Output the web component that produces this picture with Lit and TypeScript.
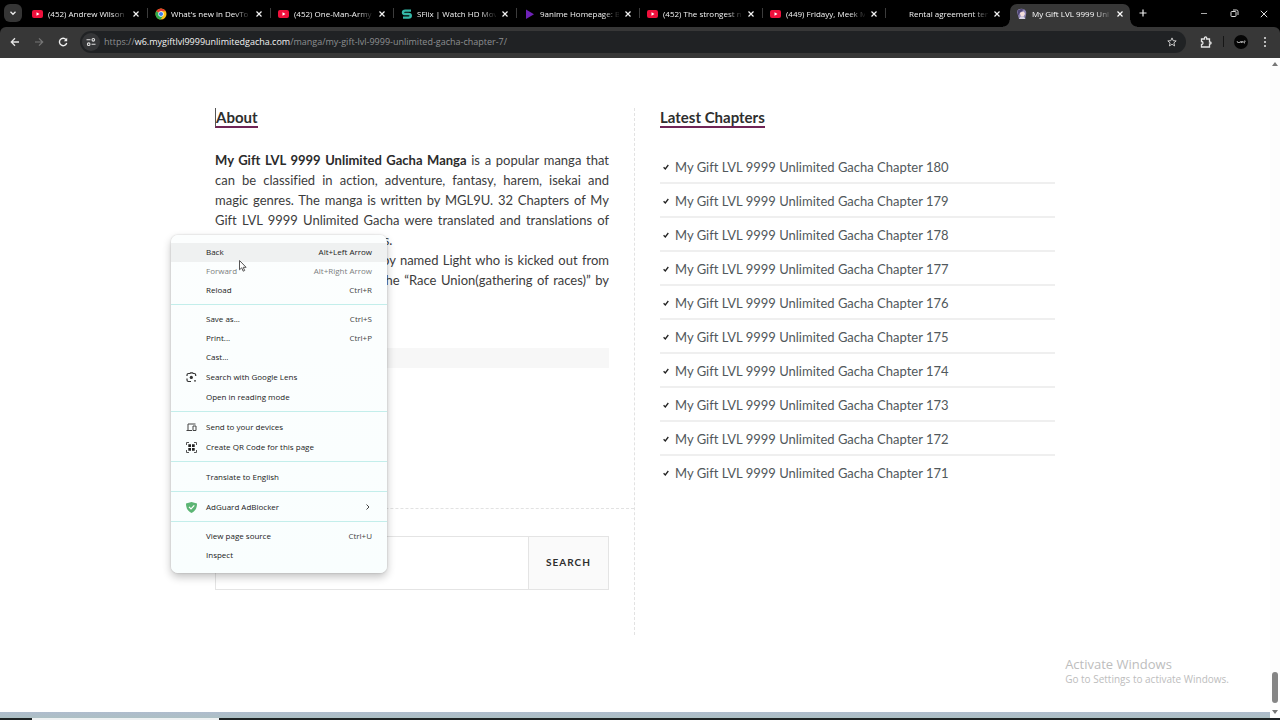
import { LitElement, html, css, svg, nothing, type TemplateResult } from "lit";
import { customElement, property } from "lit/decorators.js";
import { classMap } from "lit/directives/class-map.js";

type IconName = "youtube" | "chrome" | "sflix" | "play" | "none" | "avatar";

const tabIcons: Record<IconName, TemplateResult | typeof nothing> = {
  youtube: svg`<rect x="0" y="2" width="11" height="8" rx="2" fill="#f0103c"/><path d="M4.500 4.200v3.600L7.500 6z" fill="#fff"/>`,
  chrome: svg`<circle cx="6" cy="6" r="5.500" fill="#fbc116"/><path d="M6 6 1.200 3.300A5.500 5.500 0 0 1 10.800 3.300H6z" fill="#e33b2e"/><path d="M6 6 1.200 3.300A5.500 5.500 0 0 0 5.600 11.500L8.200 7.400z" fill="#2da94f"/><circle cx="6" cy="6" r="2.700" fill="#fff"/><circle cx="6" cy="6" r="2.100" fill="#3b7ded"/>`,
  sflix: svg`<path d="M10 2.600H4.200C2.600 2.600 2 3.400 2 4.400S2.800 6 4.200 6h3.400C9 6 9.800 6.700 9.800 7.800S9 9.600 7.600 9.600H2" fill="none" stroke="#35b8a8" stroke-width="2.400"/>`,
  play: svg`<path d="M2 1.500v9.500L10 6.200z" fill="#6f22b8"/>`,
  none: nothing,
  avatar: svg`<path d="M1 4C1 1.500 3.500.5 6 .8s4.500 1.700 4.200 5L9 11H3z" fill="#8f86b5"/><path d="M3.500 4.500 8 3.500l1 2.500-1.500 2.500H5z" fill="#f4dedb"/><path d="M1.500 2.500 5 1l3 .6-3.800 3L2 8z" fill="#4d4573"/><path d="M3 11l1.500-2.500h3L9.500 11z" fill="#d9d5e6"/>`,
};

const tabs: { title: string; icon: IconName; active?: boolean }[] = [
  { title: "(452) Andrew Wilson", icon: "youtube" },
  { title: "What's new in DevTo", icon: "chrome" },
  { title: "(452) One-Man-Army", icon: "youtube" },
  { title: "SFlix | Watch HD Mov", icon: "sflix" },
  { title: "9anime Homepage: B", icon: "play" },
  { title: "(452) The strongest n", icon: "youtube" },
  { title: "(449) Fridayy, Meek M", icon: "youtube" },
  { title: "Rental agreement ter", icon: "none" },
  { title: "My Gift LVL 9999 Unl", icon: "avatar", active: true },
];

const closeGlyph = svg`<path d="M1.500 1.500l5 5m0-5l-5 5" stroke="currentColor" stroke-width="1.200" fill="none"/>`;

@customElement("browser-tabs")
class BrowserTabs extends LitElement {
  static styles = css`
    :host { display: flex; height: 27px; background: #000; color: #f4f4f4; font: 8px/12px "Open Sans", "Noto Sans", sans-serif; }
    button { border: 0; padding: 0; background: none; color: inherit; font: inherit; display: flex; align-items: center; justify-content: center; }
    .search { width: 18px; height: 18px; margin: 4px 3px 0 4px; border-radius: 6px; background: #353535; flex: none; }
    .strip { flex: 1; display: flex; min-width: 0; }
    .tab { flex: 1 1 0; min-width: 0; display: flex; align-items: center; gap: 4px; padding: 0 7px 3px 7px; margin-top: 4px; position: relative; height: 23px; box-sizing: border-box; }
    .tab::after { content: ""; position: absolute; right: 0; top: 4px; width: 1px; height: 10px; background: #3c3c3c; }
    .tab.quiet::after, .tab.active::after { display: none; }
    .tab.active { color: #fff; }
    .tab.active::before { content: ""; position: absolute; inset: 0 -5px 0 -6px;
      background:
        radial-gradient(circle at 0 0, transparent 6px, #373737 7px) 0 100% / 7px 7px no-repeat,
        radial-gradient(circle at 100% 0, transparent 6px, #373737 7px) 100% 100% / 7px 7px no-repeat; }
    .tab.active .plate { position: absolute; inset: 0 2px 0 1px; background: #373737; border-radius: 7px 7px 0 0; }
    .tab > svg, .title, .close { position: relative; }
    .icon { width: 12px; height: 12px; flex: none; }
    .title { flex: 1; min-width: 0; white-space: nowrap; mask-image: linear-gradient(90deg, #000 80%, rgba(0,0,0,.15) 98%); }
    .close { width: 10px; height: 12px; flex: none; }
    .new { width: 16px; height: 16px; margin: 5px 45px 0 3px; flex: none; }
    .window { display: flex; flex: none; gap: 14px; padding-right: 8px; height: 27px; }
    .window button { width: 16px; }
  `;
  render() {
    return html`
      <button class="search" aria-label="Search tabs"><svg width="8" height="8"><path d="M1.500 2.800 4 5.300l2.500-2.500" fill="none" stroke="#eee" stroke-width="1.300"/></svg></button>
      <div class="strip" role="tablist">
        ${tabs.map((t, i) => html`
          <div role="tab" class=${classMap({ tab: true, active: !!t.active, quiet: !!tabs[i + 1]?.active })}>
            ${t.active ? html`<span class="plate"></span>` : nothing}
            <svg class="icon" viewBox="0 0 12 12">${tabIcons[t.icon]}</svg>
            <span class="title">${t.title}</span>
            <button class="close" aria-label="Close tab"><svg width="8" height="8">${closeGlyph}</svg></button>
          </div>`)}
      </div>
      <button class="new" aria-label="New tab"><svg width="8" height="8"><path d="M4 .5v7M.5 4h7" stroke="#eee" stroke-width="1.200"/></svg></button>
      <div class="window">
        <button aria-label="Minimize"><svg width="8" height="8"><path d="M1 3.500h6" stroke="#aaa"/></svg></button>
        <button aria-label="Restore"><svg width="9" height="9"><rect x="1" y="2.500" width="5" height="5" rx=".8" fill="none" stroke="#ddd"/><path d="M3 1h3.500Q8 1 8 2.500V6" fill="none" stroke="#ddd"/></svg></button>
        <button aria-label="Close"><svg width="8" height="8"><path d="M.8.8l6.400 6.400m0-6.400L.8 7.200" stroke="#ddd"/></svg></button>
      </div>`;
  }
}

@customElement("browser-toolbar")
class BrowserToolbar extends LitElement {
  static styles = css`
    :host { display: block; background: #000; }
    .bar { display: flex; align-items: center; height: 31px; box-sizing: border-box; padding: 0 7px 2px 7px; background: #373737; border-radius: 6px 6px 0 0; font: 9px/14px "Open Sans", "Noto Sans", sans-serif; }
    button { border: 0; padding: 0; background: none; display: flex; align-items: center; justify-content: center; width: 16px; height: 20px; flex: none; margin-right: 8px; }
    .omnibox { flex: 1; display: flex; align-items: center; height: 22px; border-radius: 11px; background: #202224; padding: 0 6px 0 2px; margin: 0 12px 0 1px; color: #8d8f91; white-space: nowrap; }
    .omnibox .site { width: 18px; height: 18px; border-radius: 50%; background: #353638; margin-right: 4px; }
    .url { flex: 1; color: inherit; text-decoration: none; }
    .host { color: #f2f2f2; }
    .omnibox .star { margin: 0; }
    .rule { width: 1px; height: 11px; background: #161616; margin-right: 10px; }
    .profile { width: 14px; height: 14px; border-radius: 50%; background: #050505; margin-right: 9px; }
    .extensions { margin-right: 9px; }
    .more { margin: 0; }
  `;
  render() {
    return html`
      <div class="bar">
        <button aria-label="Back"><svg width="10" height="10"><path d="M9 5H1.500M5 1.300 1.300 5 5 8.700" fill="none" stroke="#e6e6e6" stroke-width="1.300"/></svg></button>
        <button aria-label="Forward"><svg width="10" height="10"><path d="M1 5h7.500M5 1.300 8.700 5 5 8.700" fill="none" stroke="#777" stroke-width="1.200"/></svg></button>
        <button aria-label="Reload"><svg width="10" height="10"><path d="M8 2.600A3.700 3.700 0 1 0 8.700 6" fill="none" stroke="#f0f0f0" stroke-width="1.400"/><path d="M9.200.8v3.400H5.800z" fill="#f0f0f0"/></svg></button>
        <div class="omnibox">
          <button class="site" aria-label="Site information"><svg width="10" height="10" fill="none" stroke="#e0e0e0" stroke-width="1.100"><path d="M.5 2.800h4M5.500 7.200h4"/><circle cx="7.300" cy="2.800" r="1.300"/><circle cx="2.700" cy="7.200" r="1.300"/></svg></button>
          <a class="url" href="#">https://<span class="host">w6.mygiftlvl9999unlimitedgacha.com</span>/manga/my-gift-lvl-9999-unlimited-gacha-chapter-7/</a>
          <button class="star" aria-label="Bookmark"><svg width="10" height="10"><path d="M5 .9 6.200 3.700l3 .2-2.300 2 .7 3L5 7.300 2.400 8.900l.7-3-2.300-2 3-.2z" fill="none" stroke="#d8d8d8" stroke-width=".9"/></svg></button>
        </div>
        <button class="extensions" aria-label="Extensions"><svg width="12" height="12"><path d="M1.500 3h3V2a1 1 0 0 1 2.200 0v1h2.800v3h.6a1 1 0 0 1 0 2H9.500v3h-8V8.500a1.500 1.500 0 0 0 0-3z" fill="none" stroke="#e4e4e4" stroke-width="1.300"/></svg></button>
        <span class="rule"></span>
        <button class="profile" aria-label="Profile"><svg width="10" height="4"><path d="M1 1l1 2 1-1 1 1 .5-2M5.500 1v2l1.500-2v2M8 1h1.300L8 3h1" fill="none" stroke="#bbb" stroke-width=".8"/></svg></button>
        <button class="more" aria-label="Menu"><svg width="4" height="12" fill="#e8e8e8"><circle cx="2" cy="2" r="1"/><circle cx="2" cy="6" r="1"/><circle cx="2" cy="10" r="1"/></svg></button>
      </div>`;
  }
}

interface MenuEntry { label: string; keys?: string; icon?: TemplateResult; tall?: boolean; hover?: boolean; disabled?: boolean; sub?: boolean }

const menuGroups: MenuEntry[][] = [
  [
    { label: "Back", keys: "Alt+Left Arrow", hover: true },
    { label: "Forward", keys: "Alt+Right Arrow", disabled: true },
    { label: "Reload", keys: "Ctrl+R" },
  ],
  [
    { label: "Save as...", keys: "Ctrl+S" },
    { label: "Print...", keys: "Ctrl+P" },
    { label: "Cast..." },
    { label: "Search with Google Lens", tall: true, icon: svg`<path d="M1 4V3a1.500 1.500 0 0 1 1.500-1.500H4L4.700.8h1.800l.7.7h1A1.500 1.500 0 0 1 9.700 3v1M1 6.500V8a1.500 1.500 0 0 0 1.500 1.500H5" fill="none" stroke="#333" stroke-width="1.200"/><circle cx="5.300" cy="5.400" r="1.600" fill="#333"/><circle cx="9" cy="8.800" r=".9" fill="#333"/>` },
    { label: "Open in reading mode", tall: true },
  ],
  [
    { label: "Send to your devices", tall: true, icon: svg`<path d="M9.500 2h-7.500v6M.5 8.500H6M7 4h3v4.500H7z" fill="none" stroke="#444"/>` },
    { label: "Create QR Code for this page", tall: true, icon: svg`<path d="M.5 3V.5H3M8 .5h2.500V3M.5 8v2.500H3M8 10.500h2.500V8" fill="none" stroke="#555"/><path d="M2.300 2.300h2.700v2.700H2.300zM6 2.300h2.700v2.700H6zM2.300 6h2.700v2.700H2.300zM6 6h2.700v2.700H6z" fill="#222"/>` },
  ],
  [{ label: "Translate to English", tall: true }],
  [{ label: "AdGuard AdBlocker", tall: true, sub: true, icon: svg`<path d="M5.500 0 11 1.500C11 6 9.500 9 5.500 11 1.500 9 0 6 0 1.500z" fill="#5cb574"/><path d="M3 4.800 5 6.800 8.300 3.300" fill="none" stroke="#fff" stroke-width="1.200"/>` }],
  [
    { label: "View page source", keys: "Ctrl+U" },
    { label: "Inspect" },
  ],
];

@customElement("context-menu")
class ContextMenu extends LitElement {
  static styles = css`
    :host { display: block; box-sizing: border-box; width: 216px; padding: 8px 0; border-radius: 7px; background: linear-gradient(#fcfefe, #f9fefe); box-shadow: 0 4px 8px rgba(0,0,0,.24), 0 0 2px rgba(0,0,0,.2); font: 8px/12px "Open Sans", "Noto Sans", sans-serif; color: #222; }
    .item { display: flex; align-items: center; width: 100%; height: 19px; border: 0; background: none; padding: 0 15px 2px; font: inherit; color: inherit; text-align: left; }
    .tall { height: 20px; padding-bottom: 0; }
    .hover { background: #eff1f1; }
    .item:disabled { color: #7c7f7f; }
    .icon { width: 11px; height: 11px; margin-right: 9px; flex: none; }
    .label { flex: 1; }
    .keys { color: #444; }
    .hover .keys { color: #222; }
    .item:disabled .keys { color: #7c7f7f; }
    .line { border: 0; height: 1px; margin: 4px 0 5px; background: #c3eeeb; }
  `;
  render() {
    return menuGroups.map((g, i) => html`
      ${i ? html`<hr class="line" />` : nothing}
      ${g.map((m) => html`
        <button class=${classMap({ item: true, tall: !!m.tall, hover: !!m.hover })} ?disabled=${!!m.disabled}>
          <svg class="icon" viewBox="0 0 11 11">${m.icon ?? nothing}</svg>
          <span class="label">${m.label}</span>
          ${m.keys ? html`<span class="keys">${m.keys}</span>` : nothing}
          ${m.sub ? html`<svg width="8" height="8"><path d="M2.500 1.500 5 4 2.500 6.500" fill="none" stroke="#444"/></svg>` : nothing}
        </button>`)}`);
  }
}

@customElement("site-footer")
class SiteFooter extends LitElement {
  static styles = css`
    :host { display: block; flex: 1; padding-top: 50px; font: 13px/20px Lato, sans-serif; font-variant-ligatures: none; color: #3c3c3c; }
    .columns { display: grid; grid-template-columns: 1fr 1fr; max-width: 840px; margin: 0 auto; }
    .left { border-right: 1px dashed #e2e2e2; height: 527px; }
    .about { height: 400px; border-bottom: 1px dashed #e2e2e2; padding-right: 25px; }
    .right { padding-left: 25px; }
    h2 { margin: 0 0 22px; font-size: 15px; line-height: 18px; font-weight: 700; color: #2e2e2e; display: flex; }
    h2 span { border-bottom: 2px solid #702456; }
    .caret { border-left: 1px solid #555; }
    p { margin: 0; text-align: justify; }
    b { color: #2b2b2b; }
    .ad { height: 20px; margin-top: 38px; background: #f7f7f7; }
    form { display: flex; height: 54px; margin: 27px 25px 0 0; box-sizing: border-box; border: 1px solid #e4e4e4; }
    input { flex: 1; min-width: 0; border: 0; padding: 0 12px; background: #fff; font: inherit; outline: 0; }
    form button { width: 80px; border: 0; border-left: 1px solid #e4e4e4; background: #fafafa; color: #2e2e2e; font: 700 10px/14px Lato, sans-serif; letter-spacing: 1px; padding: 0 0 2px; }
    ul { list-style: none; margin: 0; padding: 0; }
    li { display: flex; align-items: center; gap: 6px; height: 30px; border-bottom: 2px solid #efefef; padding: 2px 0 0 3px; }
    li:last-child { border: 0; }
    a { color: #51585b; text-decoration: none; }
  `;
  render() {
    const chapters = Array.from({ length: 10 }, (_, i) => 180 - i);
    return html`
      <div class="columns">
        <div class="left">
          <section class="about">
            <h2><span class="caret">About</span></h2>
            <p><b>My Gift LVL 9999 Unlimited Gacha Manga</b> is a popular manga that can be classified in action, adventure, fantasy, harem, isekai and magic genres. The manga is written by MGL9U. 32 Chapters of My Gift LVL 9999 Unlimited Gacha were translated and translations of newer chapters are in progress.</p>
            <p>The story is about a young boy named Light who is kicked out from his party which is known as the “Race Union(gathering of races)” by his friends.</p>
            <div class="ad"></div>
          </section>
          <form>
            <input type="search" aria-label="Search" />
            <button type="button">SEARCH</button>
          </form>
        </div>
        <div class="right">
          <h2><span>Latest Chapters</span></h2>
          <ul>
            ${chapters.map((n) => html`<li>
              <svg width="6" height="6"><path d="M.6 3.200 2.300 4.900 5.300 1" fill="none" stroke="#222" stroke-width="1.300"/></svg>
              <a href="#">My Gift LVL 9999 Unlimited Gacha Chapter ${n}</a>
            </li>`)}
          </ul>
        </div>
      </div>`;
  }
}

@customElement("app-root")
class AppRoot extends LitElement {
  @property({ type: Boolean }) menuOpen = true;

  static styles = css`
    :host { display: flex; flex-direction: column; height: 100vh; overflow: hidden; position: relative; background: #fff; }
    .view { flex: 1; display: flex; min-height: 0; }
    .page { flex: 1; display: flex; flex-direction: column; min-width: 0; }
    .page site-footer { min-height: 0; overflow: hidden; }
    .status { height: 6px; background: linear-gradient(#afbccd, #adc0c4); flex: none; }
    .scroll { width: 10px; display: flex; flex-direction: column; align-items: center; background: #fdfdfd; padding: 4px 0; box-sizing: border-box; }
    .track { flex: 1; display: flex; align-items: flex-end; padding-bottom: 7px; }
    .thumb { width: 6px; height: 31px; border-radius: 3px; background: #858585; }
    .taskbar { height: 2px; background: #1e2224; display: flex; padding-left: 32px; flex: none; }
    .preview { width: 15%; background: #eef1f2; }
    .menu { position: absolute; left: 171px; top: 235px; }
    .cursor { position: absolute; left: 238px; top: 259px; }
    .watermark { position: absolute; right: 51px; bottom: 34px; font: 10px/14px "Open Sans", "Noto Sans", sans-serif; color: #bdbdbd; }
    .watermark strong { display: block; font-weight: 400; font-size: 13px; line-height: 16px; }
  `;
  render() {
    return html`
      <browser-tabs></browser-tabs>
      <browser-toolbar></browser-toolbar>
      <div class="view">
        <div class="page"><site-footer></site-footer><div class="status"></div></div>
        <div class="scroll">
          <svg width="6" height="4"><path d="M3 0l3 4H0z" fill="#777"/></svg>
          <div class="track"><div class="thumb"></div></div>
          <svg width="6" height="4"><path d="M3 4l3-4H0z" fill="#777"/></svg>
        </div>
      </div>
      <div class="taskbar"><div class="preview"></div></div>
      <div class="watermark"><strong>Activate Windows</strong>Go to Settings to activate Windows.</div>
      ${this.menuOpen ? html`<context-menu class="menu"></context-menu>` : nothing}
      <svg class="cursor" width="10" height="14"><path d="M1.500 1.500v9.300l2.200-2 1.500 3.400 1.500-.7-1.500-3.200h2.900z" fill="#fff" stroke="#555"/></svg>`;
  }
}
